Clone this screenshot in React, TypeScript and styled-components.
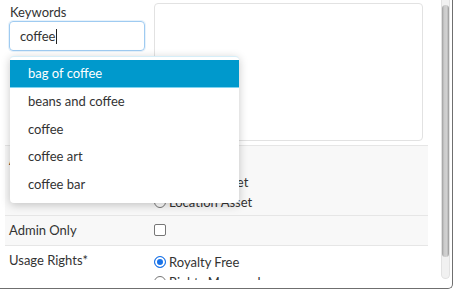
import React from 'react'
import styled, { createGlobalStyle } from 'styled-components'

const GlobalStyle = createGlobalStyle`
  html, body {
    margin: 0;
    padding: 0;
    background: #ffffff;
  }
  body {
    font-family: Lato, "Open Sans", "Liberation Sans", sans-serif;
    font-size: 13px;
    color: #333333;
  }
  * {
    box-sizing: border-box;
  }
`

const suggestions = ['bag of coffee', 'beans and coffee', 'coffee', 'coffee art', 'coffee bar']

const Frame = styled.div`
  position: relative;
  width: 453px;
  height: 289px;
  border-right: 1px solid #6f6f6f;
  border-bottom: 1px solid #6f6f6f;
  border-bottom-right-radius: 5px;
  display: flex;
  overflow: hidden;
`

const Content = styled.div`
  width: 428px;
  height: 280px;
  padding-left: 5px;
  overflow: hidden;
`

const TopSection = styled.div`
  display: grid;
  grid-template-columns: 145px 269px;
  padding: 3px 0 0 4px;
  height: 145px;
`

const Field = styled.div`
  display: flex;
  flex-direction: column;
  padding-top: 2px;
`

const Label = styled.label`
  font-size: 13px;
  line-height: 15px;
  color: #333;
  padding-left: 1px;
  margin-bottom: 1px;
`

const TextInput = styled.div`
  width: 136px;
  height: 30px;
  border: 1px solid #9fcbf1;
  border-radius: 4px;
  box-shadow: 0 0 0 1px rgba(159, 203, 241, 0.25);
  padding: 0 10px;
  display: flex;
  align-items: center;
  font-size: 13px;
  color: #333;
`

const Caret = styled.span`
  display: inline-block;
  width: 1px;
  height: 15px;
  background: #222;
  margin-left: 1px;
`

const TextArea = styled.div`
  width: 269px;
  height: 138px;
  border: 1px solid #e2e2e2;
  border-radius: 4px;
  background: #fff;
`

const Row = styled.div<{ $shaded?: boolean; $height: number }>`
  display: grid;
  grid-template-columns: 145px 1fr;
  align-items: start;
  height: ${({ $height }) => $height}px;
  padding: 6px 0 0 4px;
  background: ${({ $shaded }) => ($shaded ? '#f8f8f8' : '#ffffff')};
  border-top: 1px solid #e6e6e6;
`

const RowLabel = styled.div`
  font-size: 13px;
  line-height: 16px;
  color: #333;
`

const Options = styled.div`
  display: flex;
  flex-direction: column;
  gap: 4px;
  margin-top: 2px;
`

const Option = styled.div`
  display: flex;
  align-items: center;
  gap: 3px;
  height: 16px;
  font-size: 13px;
  color: #333;
`

const Radio = styled.span<{ $checked?: boolean }>`
  width: 12px;
  height: 12px;
  border-radius: 50%;
  border: 1px solid ${({ $checked }) => ($checked ? '#1a73e8' : '#767676')};
  background: ${({ $checked }) => ($checked ? '#1a73e8' : '#fff')};
  box-shadow: ${({ $checked }) => ($checked ? 'inset 0 0 0 2px #fff' : 'none')};
  flex-shrink: 0;
`

const Checkbox = styled.span`
  display: block;
  width: 12px;
  height: 12px;
  border: 1px solid #767676;
  border-radius: 2px;
  background: #fff;
  margin-top: 2px;
`

const ScrollTrack = styled.div`
  margin-left: 13px;
  width: 9px;
  height: 279px;
  border-radius: 0 0 5px 5px;
  background: #f1f1f1;
  border: 1px solid #e2e2e2;
  border-top: none;
  display: flex;
  flex-direction: column;
`

const ScrollThumb = styled.div`
  margin-top: 5px;
  height: 252px;
  border-radius: 4px;
  background: linear-gradient(90deg, #9f9f9f 0%, #cbcbcb 30%, #d2d2d2 70%, #969696 100%);
`

const Dropdown = styled.ul`
  position: absolute;
  left: 10px;
  top: 56px;
  width: 229px;
  margin: 0;
  padding: 3px 0 5px;
  list-style: none;
  background: #fff;
  border-radius: 4px;
  border-top: 1px solid #d6eef8;
  box-shadow: 0 2px 10px rgba(0, 0, 0, 0.22);
`

const Suggestion = styled.li<{ $active?: boolean }>`
  height: 27.5px;
  display: flex;
  align-items: center;
  padding-left: 18px;
  font-size: 13px;
  color: ${({ $active }) => ($active ? '#ffffff' : '#333333')};
  background: ${({ $active }) => ($active ? '#0099cc' : 'transparent')};
  border-bottom: ${({ $active }) => ($active ? '1px solid #7fd3f0' : 'none')};
`

export default function App() {
  return (
    <>
      <GlobalStyle />
      <Frame>
        <Content>
          <TopSection>
            <Field>
              <Label>Keywords</Label>
              <TextInput>
                coffee
                <Caret />
              </TextInput>
            </Field>
            <TextArea />
          </TopSection>
          <Row $shaded $height={70}>
            <RowLabel>Asset Type*</RowLabel>
            <Options>
              <Option>
                <Radio />
                Brand
              </Option>
              <Option>
                <Radio />
                Product Asset
              </Option>
              <Option>
                <Radio />
                Location Asset
              </Option>
            </Options>
          </Row>
          <Row $shaded $height={30}>
            <RowLabel>Admin Only</RowLabel>
            <Checkbox />
          </Row>
          <Row $height={40}>
            <RowLabel>Usage Rights*</RowLabel>
            <Options>
              <Option>
                <Radio $checked />
                Royalty Free
              </Option>
              <Option>
                <Radio />
                Rights Managed
              </Option>
            </Options>
          </Row>
        </Content>
        <ScrollTrack>
          <ScrollThumb />
        </ScrollTrack>
        <Dropdown>
          {suggestions.map((s, i) => (
            <Suggestion key={s} $active={i === 0}>
              {s}
            </Suggestion>
          ))}
        </Dropdown>
      </Frame>
    </>
  )
}
